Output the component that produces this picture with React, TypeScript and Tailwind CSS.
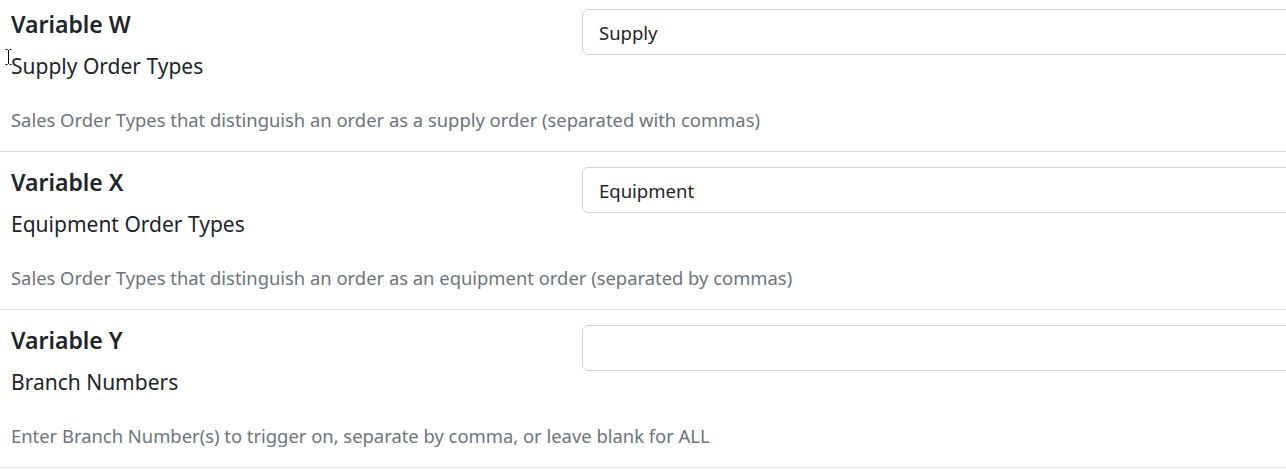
import React from "react";

const rows = [
  {
    title: "Variable W",
    subtitle: "Supply Order Types",
    value: "Supply",
    desc: "Sales Order Types that distinguish an order as a supply order (separated with commas)",
  },
  {
    title: "Variable X",
    subtitle: "Equipment Order Types",
    value: "Equipment",
    desc: "Sales Order Types that distinguish an order as an equipment order (separated by commas)",
  },
  {
    title: "Variable Y",
    subtitle: "Branch Numbers",
    value: "",
    desc: "Enter Branch Number(s) to trigger on, separate by comma, or leave blank for ALL",
  },
];

export default function App() {
  return (
    <div
      className="relative h-[469px] w-[1286px] overflow-hidden bg-white text-[#212529]"
      style={{ fontFamily: '"Noto Sans", "Open Sans", sans-serif' }}
    >
      <div className="mt-[-6px]">
        {rows.map((r) => (
          <div key={r.title} className="border-b border-[#dee2e6] pb-[20px] pl-[11px]">
            <div className="flex">
              <div className="w-[571px] shrink-0 pt-[16px]">
                <div className="text-[23px] font-semibold leading-[29px]">{r.title}</div>
                <div className="mt-[15px] text-[21px] leading-[24px]">{r.subtitle}</div>
              </div>
              <div className="pt-[15px]">
                <input
                  readOnly
                  value={r.value}
                  className="h-[46px] w-[760px] rounded-[6px] border border-[#ced4da] bg-white px-[16px] text-[18.5px] text-[#212529] outline-none"
                  style={{ fontFamily: '"Noto Sans", "Open Sans", sans-serif' }}
                />
              </div>
            </div>
            <div className="mt-[31px] text-[18.4px] leading-[22px] text-[#6c757d]">{r.desc}</div>
          </div>
        ))}
      </div>
      <svg className="absolute left-[5px] top-[49px]" width="7" height="16" viewBox="0 0 7 16">
        <path d="M0.5 0.5h2M4.5 0.5h2M3.5 1v14M0.5 15.5h2M4.5 15.5h2" stroke="#000" strokeWidth="1" fill="none" />
      </svg>
    </div>
  );
}
